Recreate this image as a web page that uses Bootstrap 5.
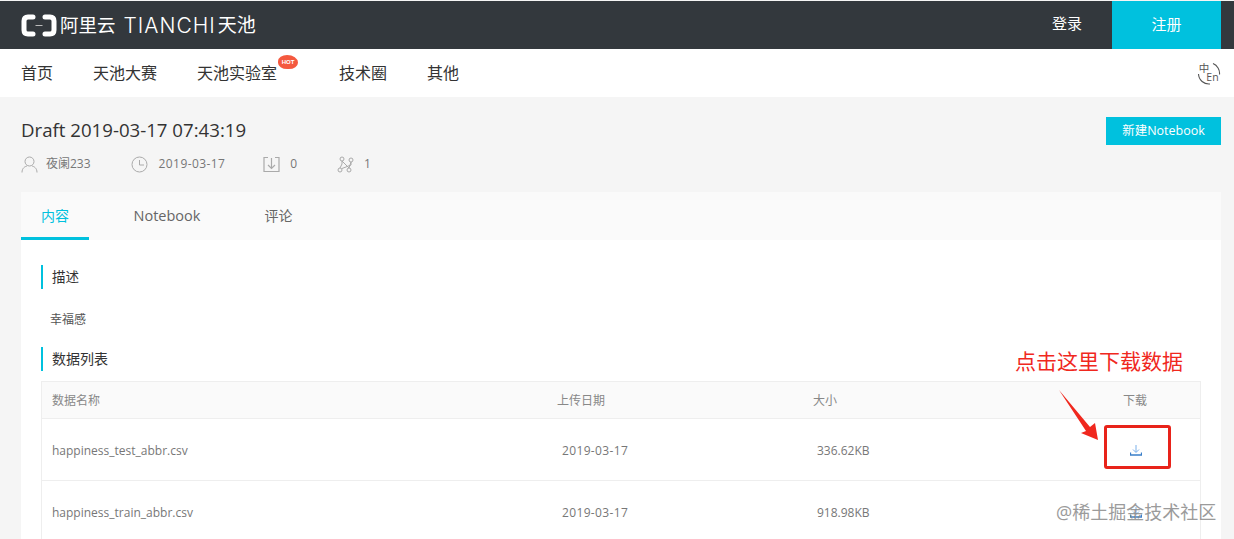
<!DOCTYPE html>
<html lang="zh"><head><meta charset="utf-8"><title>Tianchi</title>
<link rel="stylesheet" href="https://cdn.jsdelivr.net/npm/bootstrap@5.3.0/dist/css/bootstrap.min.css">
<style>
html,body{height:539px;overflow:hidden}
body{background:#f5f5f5;font-family:"Open Sans","Noto Sans CJK SC",sans-serif;color:#333;position:relative;padding-top:1px;font-size:12px}
.topbar{height:48px;background:#33383d;padding-left:21px}
.brand{color:#fff;gap:3px}
.brand-cn{font-size:18.5px;line-height:1}
.brand-en{font-size:21px;font-weight:300;letter-spacing:1px;margin-left:5px;line-height:1;font-family:"Inter","Noto Sans CJK SC",sans-serif}
.brand-en2{font-size:19px;line-height:1;margin-left:-1px}
.loginlink{color:#fff;font-size:15px;margin-right:30px;line-height:1;padding-bottom:3px}
.reg{width:109px;height:48px;background:#00c1de;color:#fff;font-size:15px;margin-right:13px;padding-bottom:2px}
.mainnav{height:48px;background:#fff;padding:0 13px 0 21px;font-size:16px;color:#333}
.mainnav span.itm{margin-right:40px}
.mainnav span.hotwrap{margin-right:62px;position:relative;display:inline-block}
.hot{position:absolute;left:81px;top:-6px;width:20px;height:14px;border-radius:50% 60% 50% 50%;background:#f4593f;color:#fff;font:700 6px/14px "Liberation Sans",sans-serif;text-align:center}
.pagehead{padding:20px 13px 0 21px;height:95px}
.ttl{font-size:18.65px;line-height:26px;color:#333;margin:0;font-weight:400}
.meta{margin-top:12px;color:#777;font-size:12px;line-height:18px}
.meta svg{display:block}
.m-date{margin-left:11px;letter-spacing:.4px}
.m-ic1{margin-left:40px}
.m-ic2{margin-left:38px}
.m-ic3{margin-left:40px}
.m-num{margin-left:10px}
.newbtn{background:#00c1de;color:#fff;border-radius:0;border:0;width:115px;height:28px;padding:0;font-size:12.5px}
.panel{margin:0 13px 0 21px;background:#fff;height:347px;overflow:hidden}
.tabbar{height:48px;background:#fafafa;font-size:14.5px;color:#666}
.tb{height:48px;line-height:47px;text-align:center}
.tb1{width:68px;color:#00c1de;border-bottom:3px solid #00c1de;font-size:14px}
.tb2{margin-left:44px;width:68px}
.tb3{margin-left:63px;width:29px;font-size:14px}
.body-in{padding:25px 20px 0}
.sect{border-left:2px solid #00c1de;height:24px;line-height:24px;padding-left:9px;font-size:13.5px;color:#333}
.sect-b{font-size:14px;line-height:23px}
.para{color:#555;font-size:12px;margin:22px 0 0 9px;line-height:18px;height:36px}
.dt{border:1px solid #eee;margin-top:10px;color:#777;font-size:12px}
.dt-h{height:37px;background:#fafafa;border-bottom:1px solid #eee;color:#888;padding-top:2px}
.dt-r{height:62px;border-bottom:1px solid #eee;padding-top:2px}
.c1{width:515px;padding-left:10px}
.c2{width:256px}
.c3{width:310px}
.c4{width:40px}
.pad5{padding-left:5px;letter-spacing:.35px}
.pad4{padding-left:4px}
.dl{display:block;margin-left:7px;margin-top:-2px}
.note{position:absolute;left:1015px;top:349px;color:#f0281e;font-size:21px;line-height:24px}
.redbox{position:absolute;left:1104px;top:425px;width:67px;height:44px;border:3px solid #e8231a;border-radius:3px}
.arrow{position:absolute;left:1055px;top:388px}
.wm{position:absolute;left:1056px;top:500px;color:#8a8a8a;font-size:18px;line-height:24px;opacity:.85}
</style></head><body>
<header class="topbar d-flex align-items-center justify-content-between">
  <div class="brand d-flex align-items-center">
    <svg width="36" height="23" viewBox="0 0 36 23"><path d="M12 3H7Q3 3 3 7V16Q3 20 7 20H12M24 3H29Q33 3 33 7V16Q33 20 29 20H24" fill="none" stroke="#fff" stroke-width="5" stroke-linecap="round"/><rect x="14.500" y="11" width="7" height="1" fill="#bbb"/></svg>
    <span class="brand-cn">阿里云</span><span class="brand-en">TIANCHI</span><span class="brand-en2">天池</span>
  </div>
  <div class="d-flex align-items-center">
    <span class="loginlink">登录</span>
    <span class="reg d-flex align-items-center justify-content-center">注册</span>
  </div>
</header>
<nav class="mainnav d-flex align-items-center justify-content-between">
  <div class="d-flex">
    <span class="itm">首页</span><span class="itm">天池大赛</span>
    <span class="itm hotwrap">天池实验室<span class="hot">HOT</span></span>
    <span class="itm">技术圈</span><span class="itm">其他</span>
  </div>
  <svg width="24" height="24" viewBox="0 0 24 24" fill="none" stroke="#555" stroke-width="1.100"><path d="M16 2.600A10.500 10.500 0 0 1 22.500 13.500M1.500 13A10.500 10.500 0 0 0 13 23"/><text x="7" y="11" font-size="10.500" fill="#555" stroke="none" text-anchor="middle" font-family="Noto Sans CJK SC">中</text><text x="15.500" y="20" font-size="10.500" fill="#555" stroke="none" text-anchor="middle" font-family="Open Sans">En</text></svg>
</nav>
<section class="pagehead d-flex justify-content-between align-items-start">
  <div>
    <h1 class="ttl">Draft 2019-03-17 07:43:19</h1>
    <div class="meta d-flex align-items-center">
      <svg width="17" height="17" viewBox="0 0 17 17" fill="none" stroke="#aaa"><circle cx="8.500" cy="5.500" r="4.500"/><path d="M1 16.500C1 12 4 10.500 6 10M16 16.500C16 12 13 10.500 11 10"/></svg>
      <span class="ms-2">夜阑233</span>
      <svg class="m-ic1" width="17" height="17" viewBox="0 0 17 17" fill="none" stroke="#aaa"><circle cx="8.500" cy="8.500" r="7.500"/><path d="M8.500 4V9H13"/></svg>
      <span class="m-date">2019-03-17</span>
      <svg class="m-ic2" width="17" height="17" viewBox="0 0 17 17" fill="none" stroke="#aaa" stroke-width="1.200"><path d="M5 1.500H1V15.500H16V1.500H12M8.500 2V12M5 9L8.500 12.500L12 9"/></svg>
      <span class="m-num">0</span>
      <svg class="m-ic3" width="17" height="17" viewBox="0 0 17 17" fill="none" stroke="#aaa"><circle cx="5" cy="3" r="2"/><circle cx="14" cy="4" r="2"/><circle cx="3" cy="14" r="2"/><circle cx="12" cy="14" r="2"/><path d="M5 5V8L3 12M14 6V9L5 12.500M14 6L12 12M5 5L12 12"/></svg>
      <span class="m-num">1</span>
    </div>
  </div>
  <button class="btn newbtn" type="button">新建Notebook</button>
</section>
<main class="panel">
  <div class="tabbar d-flex">
    <div class="tb tb1">内容</div><div class="tb tb2">Notebook</div><div class="tb tb3">评论</div>
  </div>
  <div class="body-in">
    <div class="sect">描述</div>
    <div class="para">幸福感</div>
    <div class="sect sect-b">数据列表</div>
    <div class="dt">
      <div class="dt-h d-flex align-items-center"><div class="c1">数据名称</div><div class="c2">上传日期</div><div class="c3">大小</div><div class="c4">下载</div></div>
      <div class="dt-r d-flex align-items-center"><div class="c1">happiness_test_abbr.csv</div><div class="c2 pad5">2019-03-17</div><div class="c3 pad4">336.62KB</div><div class="c4">
        <svg class="dl" width="12" height="12" viewBox="0 0 12 12" fill="none" stroke="#7ab0ea"><path d="M6 1V8M3 5.500L6 8.500L9 5.500"/><path d="M.5 8.500V11H11.500V8.500" stroke="#3a7fc9" stroke-width="1.300"/></svg></div></div>
      <div class="dt-r d-flex align-items-center"><div class="c1">happiness_train_abbr.csv</div><div class="c2 pad5">2019-03-17</div><div class="c3 pad4">918.98KB</div><div class="c4">
        <svg class="dl" width="12" height="12" viewBox="0 0 12 12" fill="none" stroke="#7ab0ea"><path d="M6 1V8M3 5.500L6 8.500L9 5.500"/><path d="M.5 8.500V11H11.500V8.500" stroke="#3a7fc9" stroke-width="1.300"/></svg></div></div>
    </div>
  </div>
</main>
<div class="note">点击这里下载数据</div>
<svg class="arrow" width="48" height="56" viewBox="0 0 48 56"><path d="M4 2L35 39L40 35L43 52L26 45L31 43Z" fill="#f0281e"/></svg>
<div class="redbox"></div>
<div class="wm">@稀土掘金技术社区</div>
</body></html>
